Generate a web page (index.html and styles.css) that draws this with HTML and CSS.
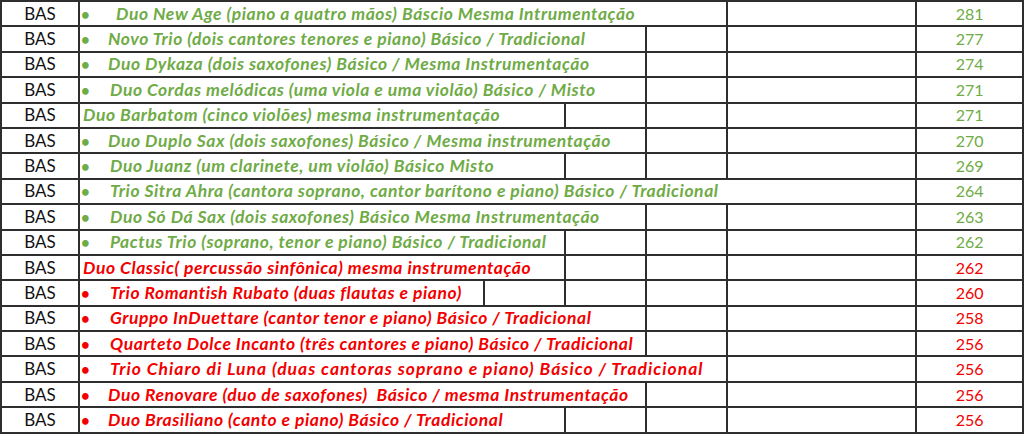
FILE: index.html
```html
<!DOCTYPE html>
<html lang="pt">
<head>
<meta charset="utf-8">
<title>Planilha</title>
<link rel="stylesheet" href="styles.css">
</head>
<body>
<table class="sheet">
  <colgroup>
    <col class="c-a">
    <col class="c-n"><col class="c-n"><col class="c-n"><col class="c-n">
    <col class="c-n"><col class="c-n"><col class="c-n"><col class="c-n">
    <col class="c-w">
    <col class="c-s">
  </colgroup>
  <tbody>
    <tr class="green">
      <td class="lvl">BAS</td>
      <td class="name" colspan="8"><span class="dot">•</span><span class="t wide">Duo New Age (piano a quatro mãos) Báscio Mesma Intrumentação</span></td>
      <td></td>
      <td class="score">281</td>
    </tr>
    <tr class="green">
      <td class="lvl">BAS</td>
      <td class="name" colspan="7"><span class="dot">•</span><span class="t tight">Novo Trio (dois cantores tenores e piano) Básico / Tradicional</span></td>
      <td></td><td></td>
      <td class="score">277</td>
    </tr>
    <tr class="green">
      <td class="lvl">BAS</td>
      <td class="name" colspan="7"><span class="dot">•</span><span class="t tight">Duo Dykaza (dois saxofones) Básico / Mesma Instrumentação</span></td>
      <td></td><td></td>
      <td class="score">274</td>
    </tr>
    <tr class="green">
      <td class="lvl">BAS</td>
      <td class="name" colspan="7"><span class="dot">•</span><span class="t">Duo Cordas melódicas (uma viola e uma violão) Básico / Misto</span></td>
      <td></td><td></td>
      <td class="score">271</td>
    </tr>
    <tr class="green">
      <td class="lvl">BAS</td>
      <td class="name plain" colspan="6"><span class="t">Duo Barbatom (cinco violões) mesma instrumentação</span></td>
      <td></td><td></td><td></td>
      <td class="score">271</td>
    </tr>
    <tr class="green">
      <td class="lvl">BAS</td>
      <td class="name" colspan="7"><span class="dot">•</span><span class="t tight">Duo Duplo Sax (dois saxofones) Básico / Mesma instrumentação</span></td>
      <td></td><td></td>
      <td class="score">270</td>
    </tr>
    <tr class="green">
      <td class="lvl">BAS</td>
      <td class="name" colspan="6"><span class="dot">•</span><span class="t">Duo Juanz (um clarinete, um violão) Básico Misto</span></td>
      <td></td><td></td><td></td>
      <td class="score">269</td>
    </tr>
    <tr class="green">
      <td class="lvl">BAS</td>
      <td class="name" colspan="9"><span class="dot">•</span><span class="t">Trio Sitra Ahra (cantora soprano, cantor barítono e piano) Básico / Tradicional</span></td>
      <td class="score">264</td>
    </tr>
    <tr class="green">
      <td class="lvl">BAS</td>
      <td class="name" colspan="7"><span class="dot">•</span><span class="t">Duo Só Dá Sax (dois saxofones) Básico Mesma Instrumentação</span></td>
      <td></td><td></td>
      <td class="score">263</td>
    </tr>
    <tr class="green">
      <td class="lvl">BAS</td>
      <td class="name" colspan="6"><span class="dot">•</span><span class="t">Pactus Trio (soprano, tenor e piano) Básico / Tradicional</span></td>
      <td></td><td></td><td></td>
      <td class="score">262</td>
    </tr>
    <tr class="red">
      <td class="lvl">BAS</td>
      <td class="name plain" colspan="6"><span class="t">Duo Classic( percussão sinfônica) mesma instrumentação</span></td>
      <td></td><td></td><td></td>
      <td class="score">262</td>
    </tr>
    <tr class="red">
      <td class="lvl">BAS</td>
      <td class="name" colspan="5"><span class="dot">•</span><span class="t">Trio Romantish Rubato (duas flautas e piano)</span></td>
      <td></td><td></td><td></td><td></td>
      <td class="score">260</td>
    </tr>
    <tr class="red">
      <td class="lvl">BAS</td>
      <td class="name" colspan="7"><span class="dot">•</span><span class="t">Gruppo InDuettare (cantor tenor e piano) Básico / Tradicional</span></td>
      <td></td><td></td>
      <td class="score">258</td>
    </tr>
    <tr class="red">
      <td class="lvl">BAS</td>
      <td class="name" colspan="7"><span class="dot">•</span><span class="t">Quarteto Dolce Incanto (três cantores e piano) Básico / Tradicional</span></td>
      <td></td><td></td>
      <td class="score">256</td>
    </tr>
    <tr class="red">
      <td class="lvl">BAS</td>
      <td class="name" colspan="8"><span class="dot">•</span><span class="t spread">Trio Chiaro di Luna (duas cantoras soprano e piano) Básico / Tradicional</span></td>
      <td></td>
      <td class="score">256</td>
    </tr>
    <tr class="red">
      <td class="lvl">BAS</td>
      <td class="name" colspan="7"><span class="dot">•</span><span class="t tight">Duo Renovare (duo de saxofones)&nbsp; Básico / mesma Instrumentação</span></td>
      <td></td><td></td>
      <td class="score">256</td>
    </tr>
    <tr class="red">
      <td class="lvl">BAS</td>
      <td class="name" colspan="6"><span class="dot">•</span><span class="t tight">Duo Brasiliano (canto e piano) Básico / Tradicional</span></td>
      <td></td><td></td><td></td>
      <td class="score">256</td>
    </tr>
  </tbody>
</table>
</body>
</html>
```
FILE: styles.css
```css
html, body {
  margin: 0;
  padding: 0;
  background: #ffffff;
}

.sheet {
  border-collapse: collapse;
  table-layout: fixed;
  width: 1023px;
  font-family: Lato, "Open Sans", sans-serif;
}

.c-a { width: 78px; }
.c-n { width: 81px; }
.c-w { width: 189px; }
.c-s { width: 107px; }

.sheet td {
  border: 2px solid #2e2e2e;
  height: 23.4px;
  padding: 0;
  white-space: nowrap;
  overflow: visible;
  vertical-align: middle;
  line-height: 22px;
}

.lvl {
  text-align: center;
  color: #111;
  font-size: 17px;
}

.score {
  text-align: center;
  font-size: 16px;
}

.green .score, .green .name { color: #6fab46; }
.red .score, .red .name { color: #f20000; }

.name {
  font-weight: 700;
  font-style: italic;
  font-size: 17.5px;
  letter-spacing: 0.55px;
  padding-left: 6px;
}

.name.plain {
  padding-left: 3px;
}

.dot {
  display: inline-block;
  width: 29px;
  padding-left: 1px;
  font-style: normal;
  font-size: 15px;
}

.t.wide { margin-left: 6px; }
.t.tight { margin-left: -2px; }
.t.spread { letter-spacing: 1px; }
```
